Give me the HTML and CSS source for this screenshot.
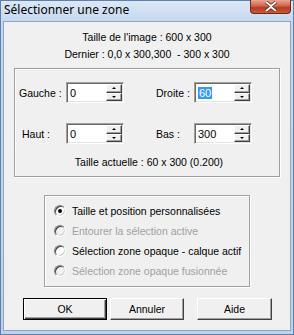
FILE: index.html
```html
<!DOCTYPE html>
<html lang="fr">
<head>
<meta charset="UTF-8">
<title>Sélectionner une zone</title>
<link rel="stylesheet" href="styles.css">
</head>
<body>

<div class="window">
  <div class="titlebar">
    <span class="title">Sélectionner une zone</span>
    <span class="close">
      <svg width="14" height="11" viewBox="0 0 14 11">
        <path d="M2 1 L7 5 L12 1 M2 10 L7 6 L12 10" fill="none" stroke="#5a1a10" stroke-width="3.2"/>
        <path d="M2 1 L7 5 L12 1 M2 10 L7 6 L12 10" fill="none" stroke="#fff" stroke-width="1.8"/>
      </svg>
    </span>
  </div>

  <div class="client">
    <div class="info">
      <p>Taille de l'image : 600 x 300</p>
      <p>Dernier : 0,0 x 300,300&nbsp; - 300 x 300</p>
    </div>

    <div class="group coords">
      <div class="fields">
        <div class="field">
          <span class="lbl lbl-left">Gauche :</span>
          <div class="spin"><span class="val">0</span><div class="arrows"><span class="up"></span><span class="down"></span></div></div>
        </div>
        <div class="field">
          <span class="lbl lbl-right">Droite :</span>
          <div class="spin"><span class="val"><span class="sel">60</span></span><div class="arrows"><span class="up"></span><span class="down"></span></div></div>
        </div>
        <div class="field">
          <span class="lbl lbl-left indent">Haut :</span>
          <div class="spin"><span class="val">0</span><div class="arrows"><span class="up"></span><span class="down"></span></div></div>
        </div>
        <div class="field">
          <span class="lbl lbl-right">Bas :</span>
          <div class="spin"><span class="val">300</span><div class="arrows"><span class="up"></span><span class="down"></span></div></div>
        </div>
      </div>
      <p class="current">Taille actuelle : 60 x 300 (0.200)</p>
    </div>

    <div class="group options">
      <div class="radio checked"><span class="dot"></span>Taille et position personnalisées</div>
      <div class="radio disabled"><span class="dot"></span>Entourer la sélection active</div>
      <div class="radio"><span class="dot"></span>Sélection zone opaque - calque actif</div>
      <div class="radio disabled"><span class="dot"></span>Sélection zone opaque fusionnée</div>
    </div>

    <div class="buttons">
      <div class="btn btn-ok">OK</div>
      <div class="btn btn-cancel">Annuler</div>
      <div class="btn btn-help">Aide</div>
    </div>
  </div>
</div>

</body>
</html>
```

FILE: styles.css
```css
:root{
  --face:#f0f0f0;
  --shadow:#a0a0a0;
  --dark:#696969;
  --text:#000;
  --grey:#a0a0a0;
}
*{box-sizing:border-box}
body{
  margin:0;
  font-family:"Liberation Sans", Arial, sans-serif;
  font-size:10.5px;
  color:var(--text);
}
p{margin:0}

/* WINDOW FRAME */
.window{
  width:294px;
  height:335px;
  border:1px solid #5f80ad;
  background:linear-gradient(#dbe7f6 0, #c4d7ef 22px, #bcd1ec 100%);
  display:flex;
  flex-direction:column;
}
.titlebar{
  height:20px;
  display:flex;
  justify-content:space-between;
  align-items:flex-start;
  padding-left:3px;
}
.title{
  font-family:"Noto Sans", sans-serif;
  font-size:12px;
  line-height:17px;
}
.close{
  width:41px;
  height:14px;
  margin:-1px 2px 0 0;
  border:1px solid #6b2a1e;
  border-top:none;
  border-radius:0 0 4px 4px;
  background:linear-gradient(#e9a693, #d0654c 45%, #b73a1f 60%, #c95a3c);
  display:flex;
  justify-content:center;
  align-items:center;
}

/* CLIENT AREA */
.client{
  flex:1;
  margin:0 2px 3px;
  border:1px solid #8fa6c3;
  background:var(--face);
}
.info{
  padding-top:7px;
  text-align:center;
  line-height:17px;
}

/* GROUP BOXES */
.group{
  border:1px solid #a0a0a0;
  box-shadow:inset 1px 1px 0 #fff, 1px 1px 0 #fff;
}
.coords{
  margin:5px 10px 0;
  padding:13px 0 5px 4px;
}
.fields{
  display:grid;
  grid-template-columns:137px auto;
  row-gap:20px;
}
.field{
  display:flex;
  align-items:center;
}
.lbl-left{width:47px}
.lbl-right{width:38px}
.indent{padding-left:3px}

/* SPIN BOX */
.spin{
  width:58px;
  height:21px;
  display:flex;
  border:1px solid;
  border-color:var(--shadow) #fff #fff var(--shadow);
  box-shadow:inset 1px 1px 0 var(--dark), inset -1px -1px 0 #e3e3e3;
  background:#fff;
  padding:1px;
}
.val{
  flex:1;
  padding:2px 0 0 2px;
  font-size:11px;
  line-height:14px;
}
.sel{
  background:#3399ff;
  color:#fff;
  padding:0 1px;
}
.arrows{
  width:16px;
  display:flex;
  flex-direction:column;
}
.arrows span{
  flex:1;
  background:var(--face);
  border:1px solid;
  border-color:#fff #404040 #404040 #fff;
  box-shadow:inset -1px -1px 0 var(--shadow);
  display:flex;
  justify-content:center;
  align-items:center;
}
.arrows span::after{
  content:"";
  border-left:2px solid transparent;
  border-right:2px solid transparent;
}
.up::after{border-bottom:2px solid #000}
.down::after{border-top:2px solid #000}

.current{
  margin-top:10px;
  line-height:17px;
  text-align:center;
}

/* RADIOS */
.options{
  margin:18px 40px 0;
  padding:5px 0 5px 9px;
}
.radio{
  height:20px;
  display:flex;
  align-items:center;
}
.dot{
  width:12px;
  height:12px;
  margin-right:6px;
  border-radius:50%;
  border:1px solid;
  border-color:#808080 #fff #fff #808080;
  box-shadow:inset 1px 1px 0 #404040, inset -1px -1px 0 #d4d0c8;
  background:#fff;
  display:flex;
  justify-content:center;
  align-items:center;
}
.checked .dot::after{
  content:"";
  width:4px;
  height:4px;
  border-radius:50%;
  background:#000;
}
.disabled{color:var(--grey)}
.disabled .dot{background:var(--face)}

/* BUTTONS */
.buttons{
  display:flex;
  margin-top:11px;
}
.btn{
  height:22px;
  display:flex;
  justify-content:center;
  align-items:center;
  background:var(--face);
  border:1px solid;
  border-color:#fff #404040 #404040 #fff;
  box-shadow:inset -1px -1px 0 var(--shadow);
}
.btn-ok{
  width:84px;
  margin-left:19px;
  border:1px solid #000;
  box-shadow:inset 1px 1px 0 #fff, inset -1px -1px 0 #404040, inset -2px -2px 0 var(--shadow);
}
.btn-cancel{
  width:74px;
  margin-left:3px;
}
.btn-help{
  width:75px;
  margin-left:13px;
}
```
